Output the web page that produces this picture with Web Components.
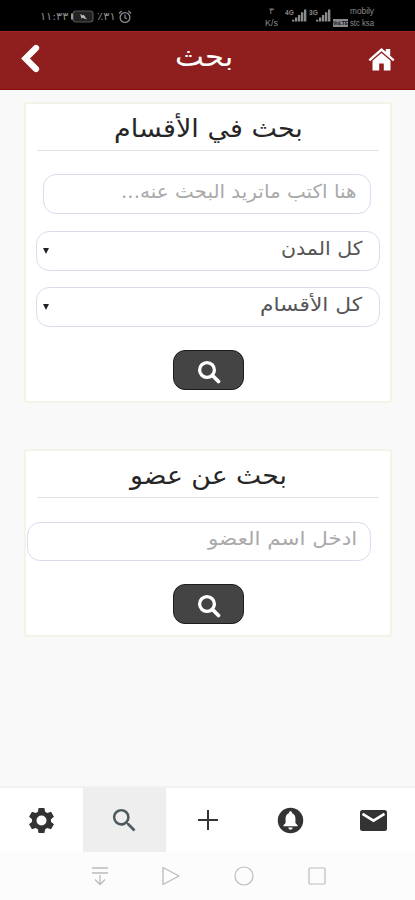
<!DOCTYPE html>
<html lang="ar">
<head>
<meta charset="utf-8">
<title>بحث</title>
<style>
html,body{margin:0;height:100%}
body{width:415px;height:900px;overflow:hidden;background:#f9f9f9;font-family:"DejaVu Sans","Noto Sans",sans-serif}
</style>
</head>
<body>
<search-app></search-app>
<script>
const define=(name,html,setup)=>customElements.define(name,class extends HTMLElement{
  connectedCallback(){
    if(this.shadowRoot)return;
    this.attachShadow({mode:"open"}).innerHTML=html;
    if(setup)setup.call(this,this.shadowRoot);
  }
});

/* A single line of text stretched to a given width */
define("fit-text",`<style>
:host{display:block;white-space:nowrap;direction:rtl}
span{display:inline-block;transform-origin:100% 50%}
:host([ltr]){direction:ltr}
:host([ltr]) span{transform-origin:0 50%}
</style><span><slot></slot></span>`,function(root){
  const w=+this.getAttribute("w"),s=root.querySelector("span");
  this.style.width=w+"px";
  s.style.transform="scaleX("+w/s.offsetWidth+")";
});

const glyphs={
  back:'<path d="M16 4 5.500 14.500 16 25" fill="none" stroke="currentColor" stroke-width="6.200" stroke-linecap="round"/>',
  home:'<path d="M.5 13.500 13.500 2l4.300 3.800V3h4.400v6.800l4.300 3.700-1.500 1.800L13.500 5.300 2 15.300z"/><path d="M4.500 14.800 13.500 7l9 7.800V24.500h-6.700v-7h-4.600v7H4.500z"/>',
  find:'<circle cx="10" cy="10" r="7.400" fill="none" stroke="currentColor" stroke-width="3.300"/><path d="m15.500 15.500 6 6" fill="none" stroke="currentColor" stroke-width="3.800" stroke-linecap="round"/>',
  search:'<path d="M15.500 14h-.79l-.28-.27A6.471 6.471 0 0 0 16 9.500 6.500 6.500 0 1 0 9.500 16c1.610 0 3.090-.59 4.230-1.570l.27.28v.79l5 4.990L20.490 19l-4.990-5zm-6 0C7.010 14 5 11.990 5 9.500S7.010 5 9.500 5 14 7.010 14 9.500 11.990 14 9.500 14z"/>',
  gear:'<path fill-rule="evenodd" d="M11 1h6l.8 4 2.200 1.200 3.900-1.400 3 5.200-3.100 2.700v2.600l3.100 2.700-3 5.200-3.900-1.400-2.200 1.200-.8 4h-6l-.8-4L8 21.800l-3.900 1.400-3-5.200 3.100-2.700v-2.600L1.100 10l3-5.200L8 6.200 10.200 5zM14 8.800a5.200 5.200 0 1 0 0 10.400 5.200 5.200 0 0 0 0-10.400z"/>',
  plus:'<path d="M10 0v20M0 10h20" stroke="currentColor" stroke-width="2"/>',
  bell:'<circle cx="14" cy="14" r="13.200"/><path fill="#fff" d="M14 4.500c1 0 1.500.7 1.500 1.600 2.500.9 3.600 3.100 3.600 5.900v4.500l2.200 2.500v1H6.700v-1l2.200-2.500V12c0-2.800 1.100-5 3.600-5.900 0-.9.5-1.600 1.500-1.600zM11.800 21.200h4.400c0 1.400-1 2.300-2.200 2.300s-2.200-.9-2.200-2.300z"/>',
  mail:'<rect width="27" height="21" rx="2.500"/><path d="m2.500 3.800 11 6.800 11-6.800" fill="none" stroke="#fff" stroke-width="2.600"/>',
  drop:'<path d="M0 1h16M0 6h16M8 8v9M3 12.500l5 5 5-5" fill="none" stroke="currentColor" stroke-width="1.300"/>',
  play:'<path d="M1 1.500v17L17 10z" fill="none" stroke="currentColor" stroke-width="1.300" stroke-linejoin="round"/>',
  ring:'<circle cx="10" cy="10" r="9" fill="none" stroke="currentColor" stroke-width="1.200"/>',
  square:'<rect x="1" y="1" width="16" height="16" rx=".8" fill="none" stroke="currentColor" stroke-width="1.200"/>',
  alarm:'<circle cx="7" cy="7.500" r="4.900" fill="none" stroke="currentColor" stroke-width="1.300"/><path d="M7 4.500v3.300l2 1M1 3.500 3.600 1M13 3.500 10.400 1" fill="none" stroke="currentColor" stroke-width="1.200"/>',
  battery:'<rect x="3" y="1" width="20" height="11" rx="3" fill="#222" stroke="#555" stroke-width="1.200"/><path d="M2 3.500v6" stroke="#999" stroke-width="2"/><path d="m10 4 3 1.500.5-1 3.500 5-4.500-1.800-.8 1z" fill="#bbb"/>',
  bars:'<path d="M0 11h2.500v2H0zM3.200 8.500h2.500V13H3.200zM6.400 6h2.500v7H6.400zM9.600 3h2.500v10H9.600zM12.800 0h2.500v13h-2.500z"/>'
};
define("app-icon",`<style>:host{display:block;flex:none}svg{display:block;width:100%;height:100%;overflow:visible}</style><svg fill="currentColor"></svg>`,function(root){
  const [w,h]=this.getAttribute("box").split(" ");
  const svg=root.querySelector("svg");
  svg.setAttribute("viewBox","0 0 "+w+" "+h);
  svg.innerHTML=glyphs[this.getAttribute("name")];
  this.style.width=(this.getAttribute("w")||w)+"px";
  this.style.height=(this.getAttribute("h")||h)+"px";
});

define("status-bar",`<style>
:host{display:flex;box-sizing:border-box;height:31px;background:#000;color:#8b8b8b;padding:0 41px 0 40px;justify-content:space-between}
.l,.r{display:flex}.l{align-items:center;padding-top:2px;gap:2px;font-size:11px}
.r{gap:6px;padding-top:5px;font-size:8px;line-height:11px;font-family:"Liberation Sans",sans-serif}
.rate{text-align:center;width:15px;line-height:12px;font-size:9px}
.sig{display:flex;padding-top:4px;line-height:8px;font-size:8px;font-weight:bold}
.sig app-icon{margin-left:-2px}
.names{display:flex;flex-direction:column;font-size:9px}
.row{display:flex;gap:2px;align-items:center;justify-content:flex-end;height:12px}
.hd{font-size:6px;line-height:8px;color:#111;background:#8b8b8b;font-weight:bold}
</style>
<div class="l"><fit-text w="28">١١:٣٣</fit-text><app-icon name="battery" box="25 13"></app-icon><fit-text w="19" ltr>٪٣١</fit-text><app-icon name="alarm" box="14 14"></app-icon></div>
<div class="r"><div class="rate">٣<br>K/s</div>
<div class="sig"><fit-text ltr w="9">4G</fit-text><app-icon name="bars" box="16 13" w="15"></app-icon></div>
<div class="sig" style="margin-left:-4px"><fit-text ltr w="9">3G</fit-text><app-icon name="bars" box="16 13" w="15"></app-icon></div>
<div class="names" style="margin-left:-4px"><div class="row"><fit-text ltr w="24">mobily</fit-text></div><div class="row"><fit-text ltr class="hd" w="15">VoLTE</fit-text><fit-text ltr w="24">stc ksa</fit-text></div></div></div>`);

define("title-bar",`<style>
:host{display:grid;grid-template-columns:1fr auto 1fr;height:59px;box-sizing:border-box;background:#8f1f1f;border-top:1px solid #a12525;border-bottom:1px solid #8a0c0c;color:#fff;padding:0 20px 0 20px}
fit-text{font-size:28px;line-height:50px;margin-right:7px}
.b{padding-top:12px}.h{padding-top:14px;justify-self:end}
</style><app-icon class="b" name="back" box="20 29"></app-icon><fit-text w="58"><slot></slot></fit-text><app-icon class="h" name="home" box="27 25"></app-icon>`);

define("search-card",`<style>
:host{display:flex;flex-direction:column;align-items:center;box-sizing:border-box;width:368px;margin-left:24px;background:#fff;border:2px solid #f3f3e7;border-radius:3px;padding:0 2px}
header{width:342px;height:46px;border-bottom:1px solid #e3e3e7;display:flex;justify-content:center;color:#262626;font-size:25px;line-height:49px}
</style><header><slot name="title"></slot></header><slot></slot>`);

define("form-field",`<style>
:host{display:flex;align-items:center;justify-content:space-between;direction:rtl;box-sizing:border-box;height:40px;border:1.500px solid #dcdaee;border-radius:13px;background:#fff;color:#aaa;padding:0 13px 7px 12px;font-size:19px;line-height:32px}
:host([select]){color:#555;padding-right:17px;padding-left:6px}
i{display:none;width:0;height:0;border:3.500px solid transparent;border-top:6px solid #222;border-bottom:0;margin-top:6px}
:host([select]) i{display:block}
</style><slot></slot><i></i>`);

define("search-button",`<style>
:host{display:flex;align-items:center;justify-content:center;box-sizing:border-box;width:71px;height:40px;background:#444;border:1.500px solid #192019;border-radius:12px;color:#fff;padding-top:3px}
</style><app-icon name="find" box="23 23"></app-icon>`);

define("tab-bar",`<style>
:host{display:grid;grid-template-columns:repeat(5,1fr);height:64px;background:#fff;border-top:2px solid #f1f1f1;color:#333;margin-top:auto}
div{display:flex;align-items:center;justify-content:center}
.on{background:#eee;color:#4e5a60}
</style><div><app-icon name="gear" box="28 28" w="27" h="27"></app-icon></div><div class="on"><app-icon name="search" box="24 24" w="31" h="31"></app-icon></div><div><app-icon name="plus" box="20 20"></app-icon></div><div><app-icon name="bell" box="28 28" w="27" h="27"></app-icon></div><div><app-icon name="mail" box="27 21"></app-icon></div>`);

define("system-nav",`<style>
:host{display:flex;align-items:center;justify-content:space-between;box-sizing:border-box;height:48px;background:#fcfcfc;color:#bbb;padding:0 89px 0 92px}
</style><app-icon name="drop" box="16 18"></app-icon><app-icon name="play" box="18 20"></app-icon><app-icon name="ring" box="20 20"></app-icon><app-icon name="square" box="18 18"></app-icon>`);

define("search-app",`<style>
:host{display:flex;flex-direction:column;height:900px;width:415px}
.one{margin-top:12px;height:301px}.two{margin-top:46px;height:188px}
</style>
<status-bar></status-bar><title-bar>بحث</title-bar>
<search-card class="one"><fit-text slot="title" w="189">بحث في الأقسام</fit-text>
<form-field style="width:328px;margin-top:23px;margin-right:2px"><fit-text w="236">هنا اكتب ماتريد البحث عنه...</fit-text></form-field>
<form-field select style="width:344px;margin-top:17px"><fit-text w="81">كل المدن</fit-text></form-field>
<form-field select style="width:344px;margin-top:16px"><fit-text w="102">كل الأقسام</fit-text></form-field>
<search-button style="margin-top:23px"></search-button></search-card>
<search-card class="two"><fit-text slot="title" w="157">بحث عن عضو</fit-text>
<form-field style="width:344px;height:39px;margin-top:24px;margin-right:18px"><fit-text w="149">ادخل اسم العضو</fit-text></form-field>
<search-button style="margin-top:23px"></search-button></search-card>
<tab-bar></tab-bar><system-nav></system-nav>`);
</script>
</body>
</html>
